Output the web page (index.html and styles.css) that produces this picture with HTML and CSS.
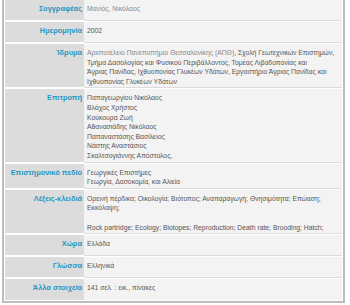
FILE: index.html
```html
<!DOCTYPE html>
<html lang="el">
<head>
<meta charset="utf-8">
<link rel="stylesheet" href="styles.css">
</head>
<body>
<div class="record">
  <div class="row">
    <div class="label">Συγγραφέας</div>
    <div class="value"><span class="link">Μανιός, Νικόλαος</span></div>
  </div>
  <div class="row">
    <div class="label">Ημερομηνία</div>
    <div class="value">2002</div>
  </div>
  <div class="row">
    <div class="label">Ίδρυμα</div>
    <div class="value"><span class="link">Αριστοτέλειο Πανεπιστήμιο Θεσσαλονίκης (ΑΠΘ)</span>, Σχολή Γεωτεχνικών Επιστημών,<br>Τμήμα Δασολογίας και Φυσικού Περιβάλλοντος, Τομέας Λιβαδοπονίας και<br>Άγριας Πανίδας, Ιχθυοπονίας Γλυκέων Υδάτων, Εργαστήριο Άγριας Πανίδας και<br>Ιχθυοπονίας Γλυκέων Υδάτων</div>
  </div>
  <div class="row">
    <div class="label">Επιτροπή</div>
    <div class="value">Παπαγεωργίου Νικόλαος<br>Βλάχος Χρήστος<br>Κούκουρα Ζωή<br>Αθανασιάδης Νικόλαος<br>Παπαναστάσης Βασίλειος<br>Νάστης Αναστάσιος<br>Σκαλτσογιάννης Απόστολος,</div>
  </div>
  <div class="row">
    <div class="label">Επιστημονικό πεδίο</div>
    <div class="value">Γεωργικές Επιστήμες<br>Γεωργία, Δασοκομία, και Αλιεία</div>
  </div>
  <div class="row">
    <div class="label">Λέξεις-κλειδιά</div>
    <div class="value">Ορεινή πέρδικα; Οικολογία; Βιότοπος; Αναπαραγωγή; Θνησιμότητα; Επώαση;<br>Εκκόλαψη;<br><br>Rock partridge; Ecology; Biotopes; Reproduction; Death rate; Brooding; Hatch;</div>
  </div>
  <div class="row">
    <div class="label">Χώρα</div>
    <div class="value">Ελλάδα</div>
  </div>
  <div class="row">
    <div class="label">Γλώσσα</div>
    <div class="value">Ελληνικά</div>
  </div>
  <div class="row">
    <div class="label">Άλλα στοιχεία</div>
    <div class="value">141 σελ. : εικ., πίνακες</div>
  </div>
</div>
</body>
</html>
```
FILE: styles.css
```css
html, body {
  margin: 0;
  padding: 0;
  background: #ffffff;
}
.record {
  margin-left: 2px;
  width: 337px;
  border: 2px solid #bdbdbd;
  border-top: 0;
  padding: 0 1px 1px 1px;
  background: #ffffff;
  font-family: "Liberation Sans", Arial, sans-serif;
  font-size: 6.8px;
  line-height: 9.6px;
}
.row {
  display: grid;
  grid-template-columns: 79px 1fr;
  min-height: 21px;
  margin-bottom: 1px;
}
.row:last-child {
  margin-bottom: 0;
}
.label {
  background: #dcdcdc;
  color: #1f97c4;
  font-weight: bold;
  font-size: 7.4px;
  white-space: nowrap;
  text-align: right;
  padding: 4px 2px 1px 0;
  border-bottom: 1px solid #ffffff;
}
.value {
  background: #f3f3f3;
  color: #555555;
  white-space: nowrap;
  padding: 4px 2px 1px 3px;
  border-bottom: 1px solid #dcdcdc;
}
.row:last-child .label,
.row:last-child .value {
  border-bottom: 0;
}
.link {
  color: #888888;
}
```
